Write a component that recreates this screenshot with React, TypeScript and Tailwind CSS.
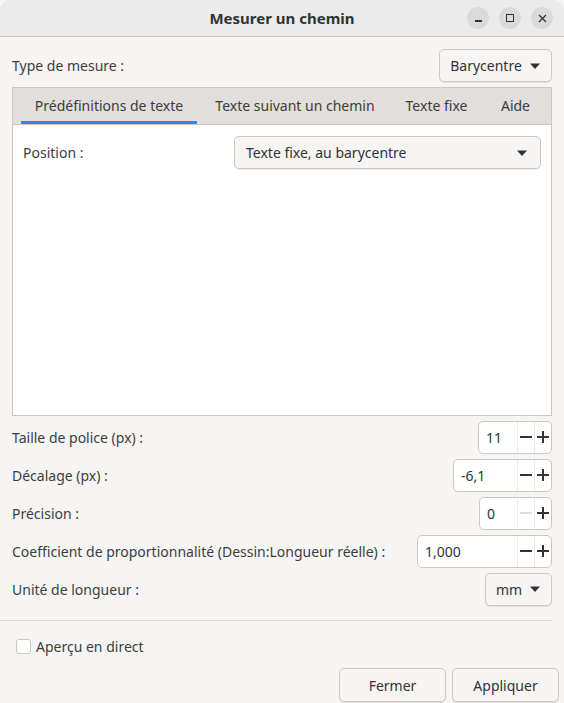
import { useState } from 'react'

function Caret() {
  return (
    <svg width="12" height="8" viewBox="0 0 12 8" className="shrink-0">
      <path d="M1 1.5h10L6 7z" fill="#2e3436" />
    </svg>
  )
}

function SpinButton({ value, width, minusDisabled }: { value: string; width: number; minusDisabled?: boolean }) {
  return (
    <div
      className="flex h-[33px] items-stretch rounded-[5px] border border-[#cdc7c2] bg-white"
      style={{ width }}
    >
      <div className="flex flex-1 items-center pl-[7px] text-[14px] text-[#2e3436]">{value}</div>
      <div className="flex w-[17px] items-center justify-center border-l border-[#ebe9e7]">
        <span className={`block h-[2px] w-[12px] ${minusDisabled ? 'bg-[#dcdcdc]' : 'bg-[#2e3436]'}`} />
      </div>
      <div className="relative flex w-[17px] items-center justify-center border-l border-[#ebe9e7]">
        <span className="block h-[2px] w-[12px] bg-[#2e3436]" />
        <span className="absolute block h-[12px] w-[2px] bg-[#2e3436]" />
      </div>
    </div>
  )
}

function Row({ label, children }: { label: string; children: React.ReactNode }) {
  return (
    <div className="flex h-[38px] items-center justify-between">
      <span>{label}</span>
      {children}
    </div>
  )
}

const tabs = [
  { label: 'Prédéfinitions de texte', w: 'w-[176px]' },
  { label: 'Texte suivant un chemin', w: 'w-[196px]' },
  { label: 'Texte fixe', w: 'w-[87px]' },
  { label: 'Aide', w: 'w-[71px]' },
]

export default function App() {
  const [tab] = useState(0)
  const [preview, setPreview] = useState(false)

  return (
    <div
      className="flex h-[703px] w-[564px] flex-col overflow-hidden bg-[#f6f5f4] text-[14px] text-[#3d3d3d]"
      style={{ fontFamily: '"Noto Sans", "Open Sans", sans-serif' }}
    >
      {/* title bar */}
      <div className="relative flex h-[37px] shrink-0 items-center justify-center rounded-t-[10px] border-b border-[#c9c6c3] bg-[#ebebeb]">
        <span className="text-[15px] font-bold text-[#2e3436]">Mesurer un chemin</span>
        <div className="absolute right-[11px] top-[7px] flex gap-[10px]">
          <div className="flex h-[22px] w-[22px] items-center justify-center rounded-full bg-[#dadada]">
            <span className="mt-[6px] block h-[1.5px] w-[7px] bg-[#2e3436]" />
          </div>
          <div className="flex h-[22px] w-[22px] items-center justify-center rounded-full bg-[#dadada]">
            <span className="block h-[8px] w-[8px] border border-[#2e3436]" />
          </div>
          <div className="flex h-[22px] w-[22px] items-center justify-center rounded-full bg-[#dadada]">
            <svg width="9" height="9" viewBox="0 0 9 9">
              <path d="M1 1l7 7M8 1l-7 7" stroke="#2e3436" strokeWidth="1.3" />
            </svg>
          </div>
        </div>
      </div>

      <div className="flex flex-col px-[12px]">
        {/* type de mesure */}
        <div className="flex h-[50px] items-center justify-between pt-[7px]">
          <span>Type de mesure :</span>
          <button className="flex h-[33px] w-[113px] items-center justify-center gap-[7px] rounded-[5px] border border-[#cdc7c2] bg-[#f6f5f4] text-[#2e3436] shadow-[0_1px_0_rgba(0,0,0,0.07)]">
            Barycentre <Caret />
          </button>
        </div>

        {/* notebook */}
        <div className="flex h-[329px] flex-col border border-[#cdc7c2]">
          <div className="flex h-[37px] shrink-0 items-stretch border-b border-[#cdc7c2] bg-[#e1dedb] pl-[8px]">
            {tabs.map((t, i) => (
              <div
                key={t.label}
                className={`flex items-center justify-center whitespace-nowrap border-b-[3px] pt-[2px] ${t.w} ${
                  i === tab ? 'border-[#3584e4]' : 'border-transparent'
                }`}
              >
                {t.label}
              </div>
            ))}
          </div>
          <div className="flex-1 bg-white pl-[10px] pr-[10px] pt-[11px]">
            <div className="flex items-center justify-between">
              <span>Position :</span>
              <button className="flex h-[33px] w-[307px] items-center justify-between rounded-[5px] border border-[#cdc7c2] bg-[#f6f5f4] pl-[11px] pr-[12px] text-[#2e3436] shadow-[0_1px_0_rgba(0,0,0,0.07)]">
                <span>Texte fixe, au barycentre</span>
                <Caret />
              </button>
            </div>
          </div>
        </div>

        {/* parameters */}
        <div className="mt-[2px] flex flex-col">
          <Row label="Taille de police (px) :">
            <SpinButton value="11" width={74} />
          </Row>
          <Row label="Décalage (px) :">
            <SpinButton value="-6,1" width={99} />
          </Row>
          <Row label="Précision :">
            <SpinButton value="0" width={73} minusDisabled />
          </Row>
          <Row label="Coefficient de proportionnalité (Dessin:Longueur réelle) :">
            <SpinButton value="1,000" width={135} />
          </Row>
          <Row label="Unité de longueur :">
            <button className="flex h-[33px] w-[67px] items-center justify-center gap-[7px] rounded-[5px] border border-[#cdc7c2] bg-[#f6f5f4] text-[#2e3436] shadow-[0_1px_0_rgba(0,0,0,0.07)]">
              mm <Caret />
            </button>
          </Row>
        </div>
      </div>

      <div className="mr-[12px] mt-[12px] border-t border-[#dcd8d5]" />

      <div className="flex flex-col pl-[16px] pr-[5px]">
        <label className="mt-[17px] flex h-[16px] items-center gap-[5px]" onClick={() => setPreview(!preview)}>
          <span className="block h-[15px] w-[15px] rounded-[3px] border border-[#cdc7c2] bg-white" />
          <span>Aperçu en direct</span>
        </label>
        <div className="mt-[14px] flex justify-end gap-[6px]">
          <button className="flex h-[34px] w-[107px] items-center justify-center rounded-[5px] border border-[#cdc7c2] bg-[#f6f5f4] text-[#2e3436] shadow-[0_1px_0_rgba(0,0,0,0.07)]">
            Fermer
          </button>
          <button className="flex h-[34px] w-[107px] items-center justify-center rounded-[5px] border border-[#cdc7c2] bg-[#f6f5f4] text-[#2e3436] shadow-[0_1px_0_rgba(0,0,0,0.07)]">
            Appliquer
          </button>
        </div>
      </div>
    </div>
  )
}
